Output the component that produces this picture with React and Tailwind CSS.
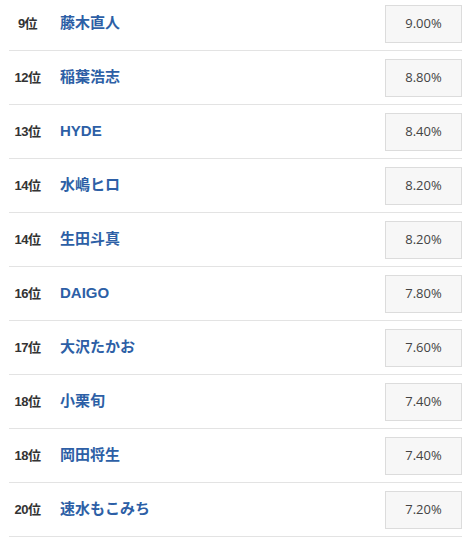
import React from 'react';

const rows = [
  { rank: '9位', name: '藤木直人', rate: '9.00%' },
  { rank: '12位', name: '稲葉浩志', rate: '8.80%' },
  { rank: '13位', name: 'HYDE', rate: '8.40%' },
  { rank: '14位', name: '水嶋ヒロ', rate: '8.20%' },
  { rank: '14位', name: '生田斗真', rate: '8.20%' },
  { rank: '16位', name: 'DAIGO', rate: '7.80%' },
  { rank: '17位', name: '大沢たかお', rate: '7.60%' },
  { rank: '18位', name: '小栗旬', rate: '7.40%' },
  { rank: '18位', name: '岡田将生', rate: '7.40%' },
  { rank: '20位', name: '速水もこみち', rate: '7.20%' },
];

const RankRow = ({ rank, name, rate }) => (
  <div className="flex items-center h-[54px] border-b border-[#e3e3e3]">
    <div className="w-[37px] text-center text-[13px] font-bold text-[#333] tracking-[-0.5px]">
      {rank}
    </div>
    <div className="flex-1 pl-[14px] text-[15px] font-bold text-[#2d5fa6]">
      {name}
    </div>
    <div className="w-[77px] h-[38px] flex items-center justify-center bg-[#f7f7f7] border border-[#dcdcdc] text-[13px] text-[#444] font-['Open_Sans','Noto_Sans_CJK_JP',sans-serif]">
      {rate}
    </div>
  </div>
);

export default function App() {
  return (
    <div className="w-[470px] h-[545px] overflow-hidden bg-white font-['Liberation_Sans','Noto_Sans_CJK_JP',sans-serif]">
      <div className="-mt-[3px] ml-[9px] w-[453px]">
        {rows.map((r, i) => (
          <RankRow key={i} {...r} />
        ))}
      </div>
    </div>
  );
}
